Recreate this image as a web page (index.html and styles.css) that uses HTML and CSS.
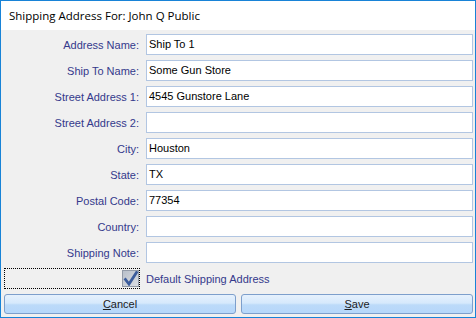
FILE: index.html
```html
<!DOCTYPE html>
<html>
<head>
<meta charset="utf-8">
<link rel="stylesheet" href="styles.css">
</head>
<body>
<div class="window">
  <div class="title">Shipping Address For: John Q Public</div>
  <div class="form">
    <label class="lbl">Address Name:</label><div class="field">Ship To 1</div>
    <label class="lbl">Ship To Name:</label><div class="field">Some Gun Store</div>
    <label class="lbl">Street Address 1:</label><div class="field">4545 Gunstore Lane</div>
    <label class="lbl">Street Address 2:</label><div class="field"></div>
    <label class="lbl">City:</label><div class="field">Houston</div>
    <label class="lbl">State:</label><div class="field">TX</div>
    <label class="lbl">Postal Code:</label><div class="field">77354</div>
    <label class="lbl">Country:</label><div class="field"></div>
    <label class="lbl">Shipping Note:</label><div class="field"></div>
    <div class="checkcell">
      <div class="checkbox">
        <svg class="check" width="15" height="15" viewBox="0 0 15 15">
          <path d="M2.5 8.5 L6 13 L13.5 1.5" fill="none" stroke="#3b5c9c" stroke-width="2.8" stroke-linecap="square" stroke-linejoin="miter"/>
        </svg>
      </div>
    </div>
    <div class="checklabel">Default Shipping Address</div>
  </div>
  <div class="buttons">
    <div class="btn"><span class="u">C</span>ancel</div>
    <div class="btn"><span class="u">S</span>ave</div>
  </div>
</div>
</body>
</html>
```
FILE: styles.css
```css
html, body {
  margin: 0;
  padding: 0;
}
body {
  width: 476px;
  height: 318px;
  font-family: "Liberation Sans", Arial, sans-serif;
  font-size: 11px;
}
.window {
  box-sizing: border-box;
  width: 476px;
  height: 318px;
  border: 1px solid #1883d7;
  background: #f0f0f0;
  display: flex;
  flex-direction: column;
}
.title {
  height: 29px;
  background: #ffffff;
  font-family: "Open Sans", "Noto Sans", sans-serif;
  font-size: 11.5px;
  line-height: 29px;
  padding-left: 8px;
  color: #000;
}
.form {
  display: grid;
  grid-template-columns: 136px 327px;
  grid-auto-rows: 21px;
  column-gap: 6px;
  row-gap: 5px;
  padding: 4px 2px 0 3px;
}
.lbl {
  display: flex;
  align-items: center;
  justify-content: flex-end;
  padding-right: 1px;
  color: #34398c;
}
.field {
  box-sizing: border-box;
  background: #fff;
  border: 1px solid #b2c6e2;
  padding: 0 2px;
  line-height: 19px;
  color: #000;
}
.checkcell {
  box-sizing: border-box;
  border: 1px dotted #000;
  display: flex;
  align-items: center;
  justify-content: flex-end;
}
.checkbox {
  box-sizing: border-box;
  width: 17px;
  height: 17px;
  border: 1px solid #939ba8;
  background: linear-gradient(135deg, #b9c0ca, #dadde3);
}
.check {
  display: block;
}
.checklabel {
  display: flex;
  align-items: center;
  color: #34398c;
}
.buttons {
  display: flex;
  gap: 5px;
  padding: 5px 2px 0 3px;
}
.btn {
  box-sizing: border-box;
  flex: 1;
  height: 20px;
  border: 1px solid #7d9fcc;
  border-radius: 3px;
  background: linear-gradient(#e6f1fd 0%, #d6e9fc 45%, #bcdaf9 55%, #b6d7fa 100%);
  text-align: center;
  line-height: 18px;
  color: #1c1c1c;
}
.u {
  text-decoration: underline;
}
```
